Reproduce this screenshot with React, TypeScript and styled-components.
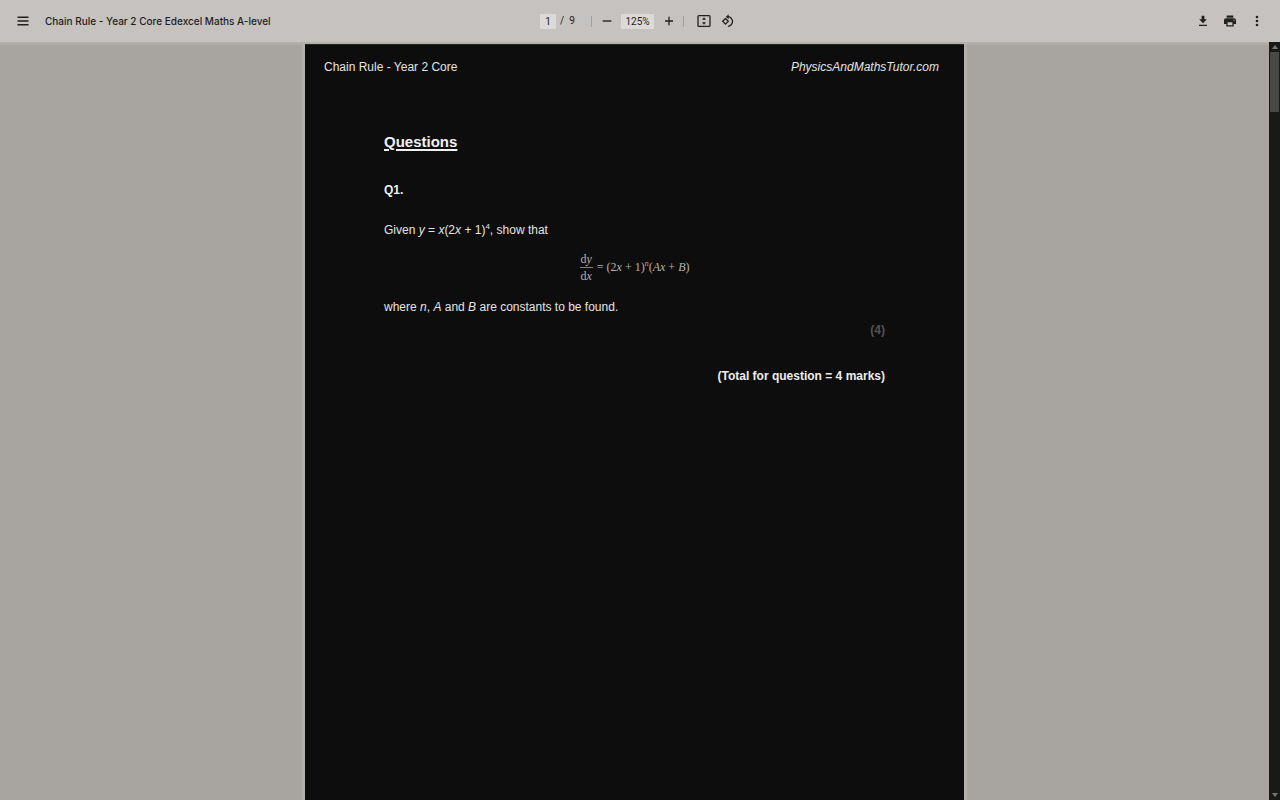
import React from 'react';
import styled, { createGlobalStyle } from 'styled-components';

const GlobalStyle = createGlobalStyle`
  * { box-sizing: border-box; }
  body { margin: 0; background: #a8a4a0; font-family: "Liberation Sans", Arial, sans-serif; }
  h1, h2, h3, p { margin: 0; }
`;

const Shell = styled.div`
  display: flex;
  flex-direction: column;
  height: 100vh;
  overflow: hidden;
`;

const Toolbar = styled.header`
  display: grid;
  grid-template-columns: 1fr auto 1fr;
  align-items: center;
  flex: none;
  height: 42px;
  padding: 0 15px 0 14px;
  background: #c6c2bf;
  color: #1d1d1c;
  font-family: Inter, sans-serif;
`;

const TitleGroup = styled.div`
  display: flex;
  align-items: center;
  gap: 14px;
`;

const Title = styled.h1`
  font-size: 10px;
  font-weight: 500;
  line-height: 16px;
  white-space: nowrap;
`;

const Controls = styled.div`
  display: flex;
  align-items: center;
  padding-right: 3px;
  font-family: Roboto, sans-serif;
  font-size: 10px;
`;

const Actions = styled.div`
  display: flex;
  justify-content: flex-end;
  gap: 10px;
`;

const IconButton = styled.button`
  display: grid;
  place-items: center;
  width: 17px;
  height: 20px;
  padding: 0;
  border: 0;
  background: none;
  color: #20211f;
`;

const Field = styled.input<{ $width: number }>`
  width: ${({ $width }) => $width}px;
  height: 15px;
  padding: 0;
  border: 0;
  background: #dcdad8;
  color: #1d1d1c;
  font: 400 10px/15px Roboto, sans-serif;
  text-align: center;
`;

const PageCount = styled.span`
  display: flex;
  gap: 5px;
  width: 35px;
  padding-left: 4px;
  line-height: 16px;
`;

const Divider = styled.span`
  width: 1px;
  height: 11px;
  background: #a19e9b;
`;

const ZoomGroup = styled.div`
  display: flex;
  align-items: center;
  gap: 6px;
  padding: 0 6px;
`;

const FitGroup = styled.div`
  display: flex;
  gap: 7px;
  padding-left: 11px;
`;

const Viewer = styled.main`
  display: flex;
  flex: 1;
  min-height: 0;
`;

const Canvas = styled.div`
  flex: 1;
  padding-top: 2px;
  overflow: hidden;
  background: linear-gradient(#b6b2af, #a8a4a0 4px);
`;

const Sheet = styled.article`
  width: 659px;
  max-width: 100%;
  min-height: 100%;
  margin: 0 auto;
  background: #0d0d0d;
  border-top: 1px solid #282725;
  box-shadow: 0 0 1px 3px #b4b0ac;
  color: #e4e4e4;
  font-size: 12px;
  line-height: 16px;
`;

const SheetHeader = styled.header`
  display: flex;
  justify-content: space-between;
  padding: 14px 25px 0 19px;
`;

const SheetBody = styled.section`
  padding: 57px 79px 0;
`;

const Heading = styled.h2`
  font-size: 15px;
  line-height: 20px;
  text-decoration: underline;
  text-decoration-thickness: 2px;
  text-underline-offset: 2px;
  color: #f1f1f1;
`;

const QuestionNumber = styled.h3`
  margin-top: 30px;
  font-size: 12px;
  line-height: 16px;
  color: #f1f1f1;
`;

const Given = styled.p`
  margin-top: 24px;
`;

const Power = styled.sup`
  font-size: 8px;
  line-height: 0;
`;

const Formula = styled.div`
  display: flex;
  align-items: center;
  justify-content: center;
  gap: 4px;
  height: 34px;
  margin-top: 12px;
  color: #b5b3ae;
  font: 12px/16px "Liberation Serif", "Times New Roman", serif;
`;

const Fraction = styled.span`
  display: flex;
  flex-direction: column;
  align-items: center;
`;

const Numerator = styled.span`
  padding: 0 1px;
  border-bottom: 1px solid #85837f;
`;

const Condition = styled.p`
  margin-top: 15px;
`;

const Marks = styled.p`
  margin-top: 7px;
  text-align: right;
  font-weight: 700;
  color: #555452;
`;

const Total = styled.p`
  margin-top: 30px;
  text-align: right;
  font-weight: 700;
  color: #ededed;
`;

const Scrollbar = styled.div`
  display: flex;
  flex-direction: column;
  flex: none;
  width: 11px;
  padding: 0 1px;
  background: #191918;
`;

const ScrollButton = styled.button`
  display: grid;
  place-items: center;
  height: 10px;
  padding: 0;
  border: 0;
  background: none;
  color: #777;
`;

const Thumb = styled.div`
  height: 60px;
  margin-bottom: auto;
  background: #484847;
`;

const MenuIcon = () => (
  <svg width="12" height="12" viewBox="0 0 12 12" fill="none" stroke="currentColor" strokeWidth="1.4" aria-hidden="true">
    <path d="M.5 2.2h11M.5 6h11M.5 9.8h11" />
  </svg>
);
const MinusIcon = () => (
  <svg width="10" height="10" viewBox="0 0 10 10" fill="none" stroke="currentColor" strokeWidth="1.4" aria-hidden="true">
    <path d="M.7 5h8.6" />
  </svg>
);
const PlusIcon = () => (
  <svg width="10" height="10" viewBox="0 0 10 10" fill="none" stroke="currentColor" strokeWidth="1.3" aria-hidden="true">
    <path d="M1 5h8M5 .8v8.4" />
  </svg>
);
const FitIcon = () => (
  <svg width="14" height="14" viewBox="0 0 14 14" aria-hidden="true">
    <rect x="1" y="1.6" width="12" height="10.8" rx="1" fill="none" stroke="currentColor" strokeWidth="1.3" />
    <path d="M7 3.2 9 5.8H5zM7 10.8 9 8.2H5z" fill="currentColor" />
  </svg>
);
const RotateIcon = () => (
  <svg width="14" height="14" viewBox="0 0 14 14" fill="none" stroke="currentColor" strokeWidth="1.3" aria-hidden="true">
    <path d="M4.5 4.5 7.3 7.3 4.5 10.1 1.7 7.3z" />
    <path d="M6.5 2.7a4.8 4.8 0 1 1 .4 9.6" />
    <path d="M7.6.3 4.9 2.8l2.7 2.5z" fill="currentColor" stroke="none" />
  </svg>
);
const DownloadIcon = () => (
  <svg width="10" height="12" viewBox="0 0 10 12" fill="currentColor" aria-hidden="true">
    <path d="M3.6.8h2.8v3.5h2.4L5 8.2 1.2 4.3h2.4zM1 9.8h8v1.3H1z" />
  </svg>
);
const PrintIcon = () => (
  <svg width="12" height="12" viewBox="0 0 12 12" fill="currentColor" aria-hidden="true">
    <path d="M2.7.5h6.6v2.2H2.7z" />
    <path fillRule="evenodd" d="M2 3.3h8a2 2 0 0 1 2 2V9H9.7v2.6H2.3V9H0V5.3a2 2 0 0 1 2-2zm1.6 4v3h4.800v-3zM9.500 4.800v1h1v-1z" />
  </svg>
);
const MoreIcon = () => (
  <svg width="12" height="12" viewBox="0 0 12 12" fill="currentColor" aria-hidden="true">
    <circle cx="6" cy="2" r="1.300" /><circle cx="6" cy="6" r="1.300" /><circle cx="6" cy="10" r="1.300" />
  </svg>
);
const Arrow = ({ down = false }: { down?: boolean }) => (
  <svg width="6" height="4" viewBox="0 0 6 4" fill="currentColor" aria-hidden="true">
    <path d={down ? 'M0 0h6L3 4z' : 'M0 4h6L3 0z'} />
  </svg>
);

export default function App() {
  return (
    <Shell>
      <GlobalStyle />
      <Toolbar>
        <TitleGroup>
          <IconButton aria-label="Menu"><MenuIcon /></IconButton>
          <Title>Chain Rule - Year 2 Core Edexcel Maths A-level</Title>
        </TitleGroup>
        <Controls>
          <Field $width={16} aria-label="Page number" defaultValue="1" />
          <PageCount><span>/</span><span>9</span></PageCount>
          <Divider />
          <ZoomGroup>
            <IconButton aria-label="Zoom out"><MinusIcon /></IconButton>
            <Field $width={33} aria-label="Zoom level" defaultValue="125%" />
            <IconButton aria-label="Zoom in"><PlusIcon /></IconButton>
          </ZoomGroup>
          <Divider />
          <FitGroup>
            <IconButton aria-label="Fit to page"><FitIcon /></IconButton>
            <IconButton aria-label="Rotate counterclockwise"><RotateIcon /></IconButton>
          </FitGroup>
        </Controls>
        <Actions>
          <IconButton aria-label="Download"><DownloadIcon /></IconButton>
          <IconButton aria-label="Print"><PrintIcon /></IconButton>
          <IconButton aria-label="More actions"><MoreIcon /></IconButton>
        </Actions>
      </Toolbar>
      <Viewer>
        <Canvas>
          <Sheet>
            <SheetHeader>
              <span>Chain Rule - Year 2 Core</span>
              <em>PhysicsAndMathsTutor.com</em>
            </SheetHeader>
            <SheetBody>
              <Heading>Questions</Heading>
              <QuestionNumber>Q1.</QuestionNumber>
              <Given>Given <i>y</i> = <i>x</i>(2<i>x</i> + 1)<Power>4</Power>, show that</Given>
              <Formula>
                <Fraction>
                  <Numerator>d<i>y</i></Numerator>
                  <span>d<i>x</i></span>
                </Fraction>
                <span>= (2<i>x</i> + 1)<Power><i>n</i></Power>(<i>Ax</i> + <i>B</i>)</span>
              </Formula>
              <Condition>where <i>n</i>, <i>A</i> and <i>B</i> are constants to be found.</Condition>
              <Marks>(4)</Marks>
              <Total>(Total for question = 4 marks)</Total>
            </SheetBody>
          </Sheet>
        </Canvas>
        <Scrollbar>
          <ScrollButton aria-label="Scroll up"><Arrow /></ScrollButton>
          <Thumb />
          <ScrollButton aria-label="Scroll down"><Arrow down /></ScrollButton>
        </Scrollbar>
      </Viewer>
    </Shell>
  );
}
